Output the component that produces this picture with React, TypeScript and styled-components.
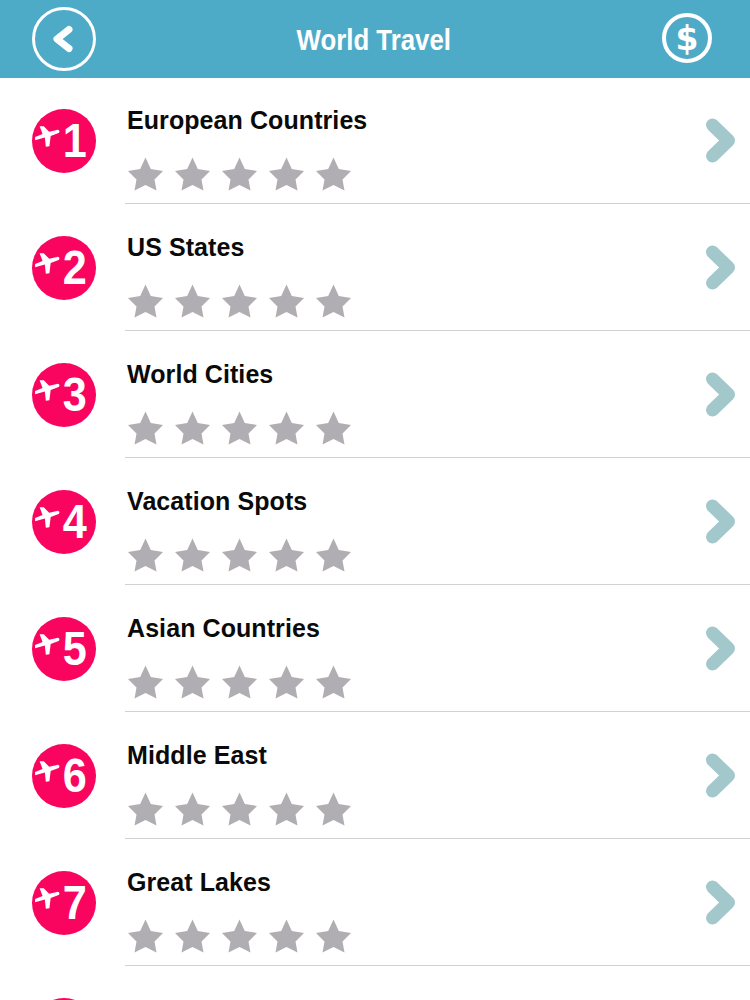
import React from "react";
import styled, { createGlobalStyle } from "styled-components";

const GS = createGlobalStyle`
  html, body {
    margin: 0;
    padding: 0;
    background: #fff;
    height: 1000px;
    overflow: hidden;
  }
`;

const Page = styled.div`
  width: 750px;
  height: 1000px;
  overflow: hidden;
  font-family: "Liberation Sans", Arial, sans-serif;
  background: #fff;
`;

const Header = styled.header`
  height: 78px;
  background: #4eabc8;
  display: grid;
  grid-template-columns: 1fr auto 1fr;
  align-items: center;
  padding: 0 38px 0 32px;
  box-sizing: border-box;
`;

const BackIcon = styled.svg`
  width: 64px;
  height: 64px;
  display: block;
`;

const Title = styled.h1`
  margin: 2px 0 0 3px;
  color: #fff;
  font-size: 29px;
  font-weight: 700;
  transform: scaleX(0.89);
`;

const Coin = styled.div`
  justify-self: end;
  width: 50px;
  height: 50px;
  box-sizing: border-box;
  border: 4px solid #fff;
  border-radius: 50%;
  color: #fff;
  font-family: "DejaVu Sans", sans-serif;
  font-size: 33px;
  font-weight: 700;
  display: flex;
  align-items: center;
  justify-content: center;
  margin-top: -2px;
`;

const Row = styled.div`
  height: 127px;
  display: flex;
  padding-left: 32px;
  box-sizing: border-box;
`;

const Badge = styled.div`
  flex: none;
  width: 64px;
  height: 64px;
  margin-top: 31px;
  border-radius: 50%;
  background: #f9055f;
  color: #fff;
  display: flex;
  align-items: center;
  justify-content: flex-end;
  padding-right: 9px;
  box-sizing: border-box;
`;

const Plane = styled.svg`
  width: 26px;
  height: 23px;
  flex: none;
  margin: -9px 0 0 0;
`;

const Digit = styled.span`
  font-size: 48px;
  font-weight: 700;
  line-height: 1;
  transform: scaleX(0.9);
  transform-origin: right center;
`;

const Body = styled.div`
  flex: 1;
  height: 126px;
  margin-left: 29px;
  padding: 27px 14px 0 2px;
  border-bottom: 1px solid #d2d2d2;
  box-sizing: border-box;
  display: flex;
  justify-content: space-between;
`;

const Info = styled.div`
  display: flex;
  flex-direction: column;
`;

const Name = styled.div`
  font-size: 25px;
  line-height: 30px;
  font-weight: 700;
  letter-spacing: 0.08px;
  color: #0a0a0a;
`;

const Stars = styled.div`
  display: flex;
  gap: 12px;
  margin: 22px 0 0 1px;
`;

const Star = styled.svg`
  width: 35px;
  height: 34px;
  display: block;
  fill: #b0aeb3;
`;

const Chevron = styled.svg`
  width: 32px;
  height: 46px;
  margin-top: 13px;
  flex: none;
`;

const lists = [
  "European Countries",
  "US States",
  "World Cities",
  "Vacation Spots",
  "Asian Countries",
  "Middle East",
  "Great Lakes",
];

const App: React.FC = () => {
  return (
    <Page>
      <GS />
      <Header>
        <BackIcon viewBox="0 0 64 64">
          <circle cx="32" cy="32" r="30.5" fill="none" stroke="#fff" strokeWidth="3" />
          <path
            d="M37 22.5 25 32l12 9.5"
            fill="none"
            stroke="#fff"
            strokeWidth="7"
            strokeLinecap="round"
            strokeLinejoin="round"
          />
        </BackIcon>
        <Title>World Travel</Title>
        <Coin>$</Coin>
      </Header>
      {lists.map((name, i) => (
        <Row key={name}>
          <Badge>
            <Plane viewBox="0 0 24 21">
              <path
                fill="#fff"
                d="M21.2 4.4c2.4-.5 3.2 2.4.9 3.2L15.4 10l-1.2 9.4-3.3.6-.9-8.6L1 14v-3l6.9-2.9L5.2 1H9l5 5.2z"
              />
            </Plane>
            <Digit>{i + 1}</Digit>
          </Badge>
          <Body>
            <Info>
              <Name>{name}</Name>
              <Stars>
                {[0, 1, 2, 3, 4].map((s) => (
                  <Star key={s} viewBox="0 0 35 34">
                    <polygon points="17.5,0.5 22.8,12 35,14 26.5,22.5 28.5,33.5 17.5,28 6.5,33.5 8.5,22.5 0,14 12.2,12" />
                  </Star>
                ))}
              </Stars>
            </Info>
            <Chevron viewBox="0 0 32 46">
              <path
                d="M8.5 7 24.5 22.5 8.5 38"
                fill="none"
                stroke="#a3c8cc"
                strokeWidth="13"
                strokeLinecap="round"
                strokeLinejoin="round"
              />
            </Chevron>
          </Body>
        </Row>
      ))}
      <Row>
        <Badge />
      </Row>
    </Page>
  );
};

export default App;
